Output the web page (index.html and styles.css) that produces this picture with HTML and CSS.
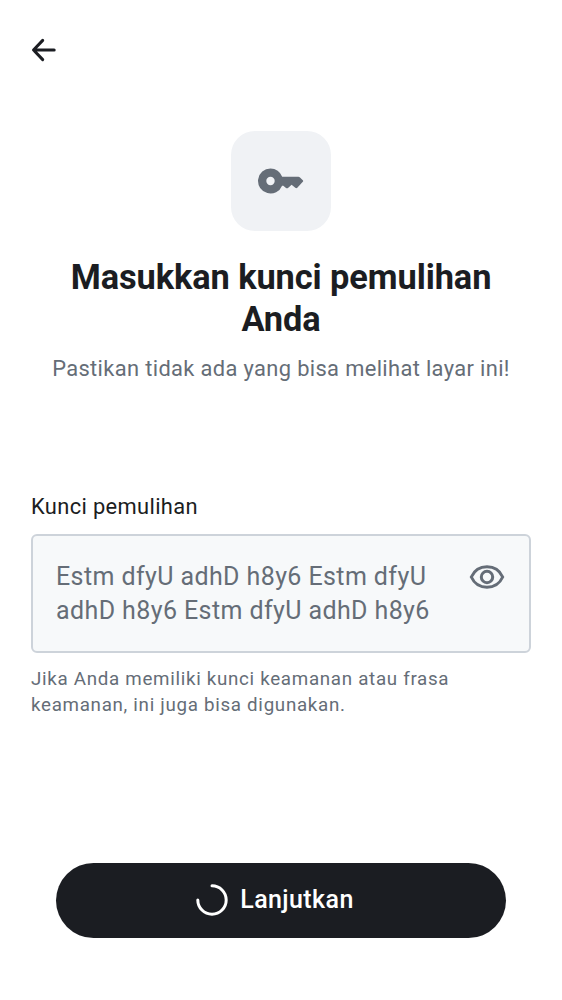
FILE: index.html
```
<!DOCTYPE html>
<html lang="id">
<head>
<meta charset="utf-8">
<title>Kunci pemulihan</title>
<link rel="stylesheet" href="styles.css">
</head>
<body>
<main class="screen">
  <header class="topbar">
    <svg class="back" viewBox="0 0 24 24"><path d="M22.200 12H1.700M10.700 2.400 1.500 12l9.200 9.600"/></svg>
  </header>
  <section class="hero">
    <div class="badge">
      <svg class="key" viewBox="0 0 46 26"><path fill-rule="evenodd" d="M12.500.5A12.500 12.500 0 0 1 24.200 8.800H40.400Q41.300 8.800 42 9.500L44.800 12.300Q45.500 13 44.800 13.800L39.300 19.800Q38.300 20.700 37.300 19.800L33.600 16.800 30 19.900Q29 20.700 28 19.900L25.300 17.700H24.100A12.500 12.500 0 1 1 12.500.5Zm0 8.300a4.200 4.200 0 1 0 0 8.400 4.200 4.200 0 0 0 0-8.400Z"/></svg>
    </div>
    <h1 class="title">Masukkan kunci pemulihan<br>Anda</h1>
    <p class="subtitle">Pastikan tidak ada yang bisa melihat layar ini!</p>
  </section>
  <section class="field">
    <div class="label">Kunci pemulihan</div>
    <div class="input">
      <div class="value">Estm dfyU adhD h8y6 Estm dfyU<br>adhD h8y6 Estm dfyU adhD h8y6</div>
      <svg class="eye" viewBox="0 0 36 26"><path d="M2.300 13C5.500 6 11.200 2.800 18 2.800S30.500 6 33.700 13C30.500 20 24.800 23.200 18 23.200S5.500 20 2.300 13Z"/><circle cx="18" cy="13" r="5.700"/></svg>
    </div>
    <p class="help">Jika Anda memiliki kunci keamanan atau frasa<br>keamanan, ini juga bisa digunakan.</p>
  </section>
  <footer class="actions">
    <button class="primary">
      <svg class="spinner" viewBox="0 0 32 32"><path d="M16 1.800A14.200 14.200 0 1 1 1.800 16"/></svg>
      <span>Lanjutkan</span>
    </button>
  </footer>
</main>
</body>
</html>
```
FILE: styles.css
```
* { box-sizing: border-box; }
body { margin: 0; background: #fff; color: #1b1d22; font-family: Roboto, sans-serif; }
.screen { height: 1000px; display: flex; flex-direction: column; }
.topbar { height: 131px; padding: 38px 32px; }
.back { display: block; width: 24px; height: 24px; fill: none; stroke: #1b1d22; stroke-width: 3; stroke-linecap: round; stroke-linejoin: round; overflow: visible; }
.hero { display: flex; flex-direction: column; align-items: center; text-align: center; height: 360px; }
.badge { width: 100px; height: 100px; border-radius: 24px; background: #f0f2f5; display: flex; align-items: center; justify-content: center; }
.key { width: 46px; height: 26px; fill: #656d77; }
.title { margin: 25px 0 0; font-size: 34.375px; line-height: 42px; font-weight: 700; letter-spacing: -.08px; white-space: nowrap; }
.subtitle { margin: 13px 0 0; font-size: 21.875px; line-height: 32px; letter-spacing: .36px; color: #656d77; white-space: nowrap; }
.field { padding: 0 31px; height: 371.500px; }
.label { font-size: 21.875px; line-height: 32px; letter-spacing: .36px; }
.input { margin-top: 11px; height: 119px; border: 2px solid #cdd3da; border-radius: 6px; background: #f7f9fa; display: flex; justify-content: space-between; padding: 24px 24px 0 23px; }
.value { font-size: 25px; line-height: 34px; letter-spacing: .4px; color: #656d77; white-space: nowrap; }
.eye { width: 36px; height: 26px; margin-top: 4px; fill: none; stroke: #656d77; stroke-width: 3; }
.help { margin: 13px 0 0; font-size: 18.75px; line-height: 26px; letter-spacing: .7px; color: #656d77; white-space: nowrap; }
.actions { padding: 0 56px; }
.primary { width: 100%; height: 75px; border: 0; border-radius: 38px; background: #1b1d22; color: #fff; display: flex; align-items: center; justify-content: center; gap: 12px; padding: 0 19px 0 7px; font: 500 25px/34px Roboto, sans-serif; letter-spacing: .4px; }
.spinner { width: 32px; height: 32px; fill: none; stroke: #fff; stroke-width: 3; stroke-linecap: round; }
```
